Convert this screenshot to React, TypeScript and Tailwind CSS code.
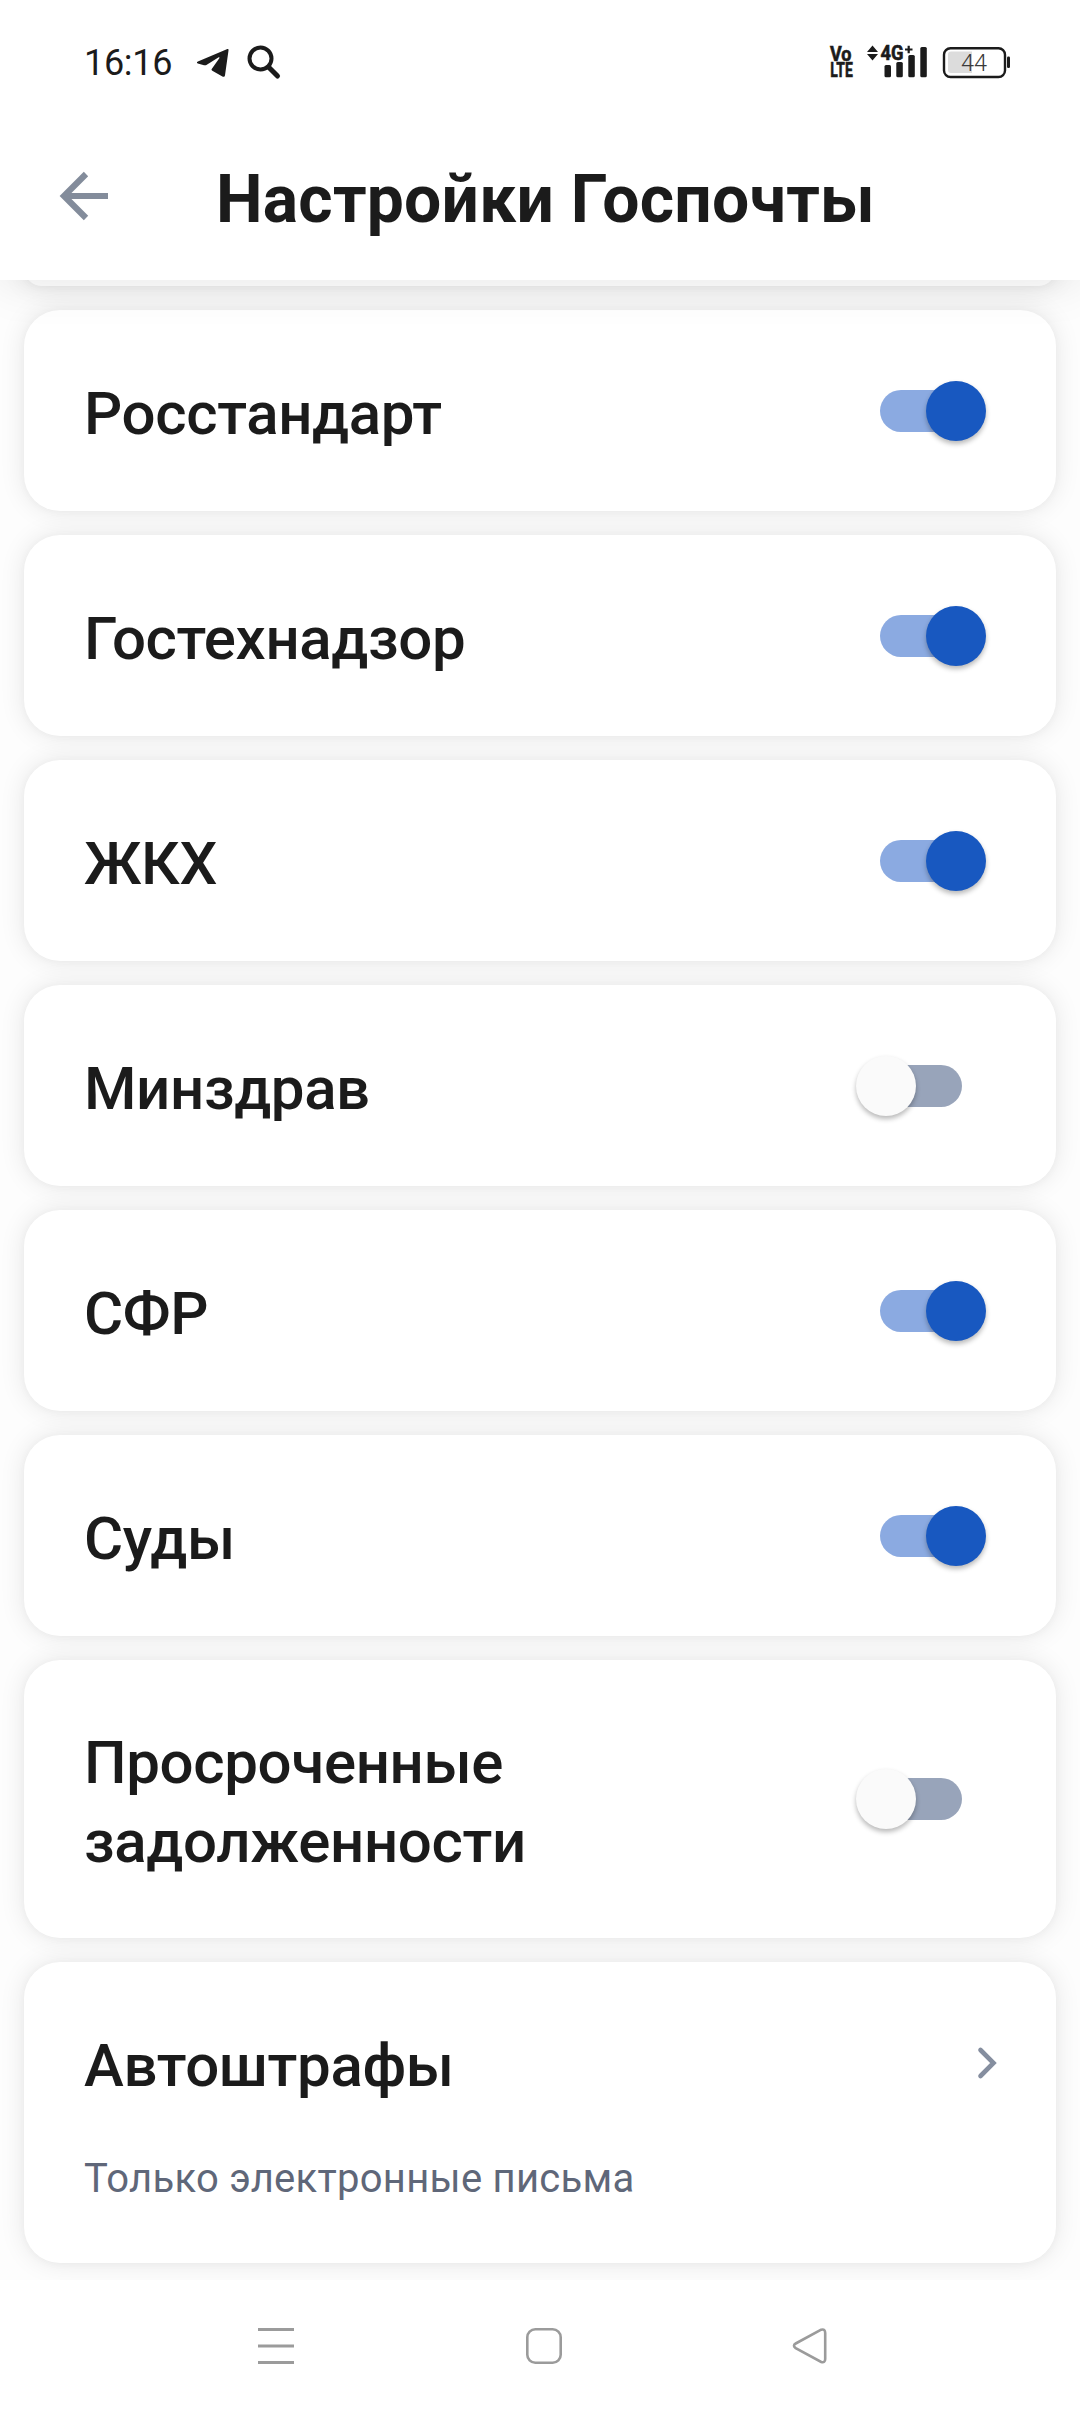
type Item = {
  title: string;
  enabled?: boolean;
  note?: string;
};

const items: Item[] = [
  { title: "Росстандарт", enabled: true },
  { title: "Гостехнадзор", enabled: true },
  { title: "ЖКХ", enabled: true },
  { title: "Минздрав", enabled: false },
  { title: "СФР", enabled: true },
  { title: "Суды", enabled: true },
  { title: "Просроченные задолженности", enabled: false },
  { title: "Автоштрафы", note: "Только электронные письма" },
];

const cardStyle =
  "shrink-0 rounded-[36px] bg-white pl-[60px] shadow-[0_0_26px_rgba(0,0,0,0.095),0_1px_8px_rgba(0,0,0,0.03)]";

const titleStyle = "text-[60px] leading-[79px] font-medium tracking-[-0.36px]";

function StatusBar() {
  return (
    <div className="flex h-[112px] items-start justify-between pt-[40px] pr-[69px] pl-[84px] text-[#1b1b1b]">
      <div className="flex items-start">
        <span className="w-[92px] pt-px text-[36px] leading-[44px] tracking-[-0.3px]">16:16</span>
        <svg className="mt-[8px] ml-[20px]" width="34" height="30" viewBox="0 0 34 30" fill="currentColor">
          <path d="M30.8 1.2c1.200-.5 1.900 0 1.700 1.200L29 27.200c-.3 1.600-1.300 2-2.600 1.300L16.300 22.800c-.9-.5-1-1.200-.4-2L23.300 10.200c.5-.8-.2-1.300-1-.8L10.800 16.800c-.9.6-1.800.7-2.800.4L1.800 15.600c-1.200-.5-1.200-1.400.1-2z" />
        </svg>
        <svg className="mt-[4px] ml-[16px]" width="36" height="36" viewBox="0 0 36 36" fill="none" stroke="currentColor">
          <circle cx="14.5" cy="14.5" r="11" strokeWidth="4" />
          <path d="M23 23.500l8.500 8.500" strokeWidth="5" strokeLinecap="round" />
        </svg>
      </div>

      <svg width="184" height="48" viewBox="827 40 184 48" fill="currentColor" className="font-bold">
        <g stroke="currentColor" strokeWidth="0.6">
          <text x="830" y="61" fontSize="19.500" textLength="21.500" lengthAdjust="spacingAndGlyphs">Vo</text>
          <text x="830.3" y="77" fontSize="20" textLength="22.500" lengthAdjust="spacingAndGlyphs">LTE</text>
          <text x="880.5" y="60" fontSize="20.500" textLength="23" lengthAdjust="spacingAndGlyphs">4G</text>
        </g>
        <path d="M872.500 45.500l5.500 6.500h-11zM872.500 60.500l5.500-6.500h-11z" />
        <path d="M905 49.500h7.500M908.700 45.700v7.500" stroke="currentColor" strokeWidth="2.200" />
        <rect x="884.500" y="65" width="6.500" height="12.300" rx="1.500" />
        <rect x="896.300" y="62" width="6.500" height="15.300" rx="1.500" />
        <rect x="908.300" y="55" width="6.500" height="22.300" rx="1.500" />
        <rect x="920.300" y="47" width="6.500" height="30.300" rx="1.500" />
        <rect x="944" y="48.200" width="61" height="28.800" rx="6.500" fill="none" stroke="currentColor" strokeWidth="2.400" />
        <path d="M951 51.500h21v21.500h-21a3 3 0 0 1-3-3V54.500a3 3 0 0 1 3-3z" fill="#dcdcdc" />
        <rect x="1007" y="56.500" width="3" height="11.500" rx="1.200" />
        <text x="961" y="70.800" fontSize="23.500" fontWeight="300" fill="#3a3a3a">44</text>
      </svg>
    </div>
  );
}

function Header() {
  return (
    <header className="relative z-10 h-[280px] shrink-0 bg-white shadow-[0_0_48px_rgba(0,0,0,0.11)]">
      <StatusBar />
      <div className="flex h-[168px] items-start">
        <svg className="mt-[58px] ml-[58px]" width="52" height="52" viewBox="0 0 52 52" fill="none" stroke="#838c9b" strokeWidth="6.2">
          <path d="M50 26H7M28 4L6 26l22 22" />
        </svg>
        <h1 className="mt-[48px] ml-[106px] text-[66px] leading-[80px] font-bold tracking-[0.2px] whitespace-nowrap text-[#1b1b1b]">
          Настройки Госпочты
        </h1>
      </div>
    </header>
  );
}

function Toggle({ on }: { on: boolean }) {
  return (
    <button
      role="switch"
      aria-checked={on}
      className="relative flex h-[60px] w-[130px] shrink-0 items-center justify-center"
    >
      <span className={`h-[42px] w-[82px] rounded-full ${on ? "bg-[#8baae1]" : "bg-[#98a4ba]"}`} />
      <span
        className={`absolute top-0 size-[60px] rounded-full shadow-[0_3px_5px_rgba(0,0,0,0.28)] ${
          on ? "right-0 bg-[#1858c0]" : "left-0 bg-[#fafafa]"
        }`}
      />
    </button>
  );
}

function Card({ title, enabled, note }: Item) {
  if (note) {
    return (
      <div className={`${cardStyle} h-[301px] pt-[64px] pr-[59px]`}>
        <div className="flex items-center justify-between">
          <span className={titleStyle}>{title}</span>
          <svg className="-mt-[6px]" width="20" height="34" viewBox="0 0 20 34" fill="none" stroke="#858e9f" strokeWidth="4.6" strokeLinecap="round">
            <path d="M3.500 4L16.500 17 3.500 30" />
          </svg>
        </div>
        <p className="mt-[44px] text-[40px] leading-[60px] tracking-[0.28px] text-[#5f6779]">{note}</p>
      </div>
    );
  }

  return (
    <div className={`${cardStyle} flex min-h-[201px] items-center justify-between py-[57px] pr-[70px]`}>
      <span className={`${titleStyle} w-[600px] pt-[6px]`}>{title}</span>
      <Toggle on={!!enabled} />
    </div>
  );
}

function NavBar() {
  return (
    <nav className="relative z-10 flex h-[132px] shrink-0 items-start bg-white pt-[46px]">
      <svg className="ml-[256px]" width="40" height="40" viewBox="0 0 40 40" stroke="#9b9b9b" strokeWidth="3">
        <path d="M2 3.5h36M2 20h36M2 36.5h36" />
      </svg>
      <svg className="ml-[228px]" width="40" height="40" viewBox="0 0 40 40" fill="none" stroke="#9b9b9b" strokeWidth="2.6">
        <rect x="3.3" y="3.3" width="33.4" height="33.4" rx="8" />
      </svg>
      <svg className="ml-[226px]" width="40" height="40" viewBox="0 0 40 40" fill="none" stroke="#9b9b9b" strokeWidth="2.6">
        <path d="M31.2 3.7L5.7 17.500q-3.500 2 0 4.600L31.200 36q4 1 4-3V7q0-4.500-4-3.300z" />
      </svg>
    </nav>
  );
}

export default function App() {
  return (
    <div className="flex h-[2412px] w-[1080px] flex-col overflow-hidden bg-[#fdfdfd] font-[Roboto,'Noto_Sans',sans-serif] text-[#1b1b1b]">
      <Header />
      <main className="-mt-[30px] flex flex-1 flex-col gap-[24px] px-[24px]">
        <div className={`${cardStyle} h-[36px]`} />
        {items.map((item) => (
          <Card key={item.title} {...item} />
        ))}
      </main>
      <NavBar />
    </div>
  );
}
